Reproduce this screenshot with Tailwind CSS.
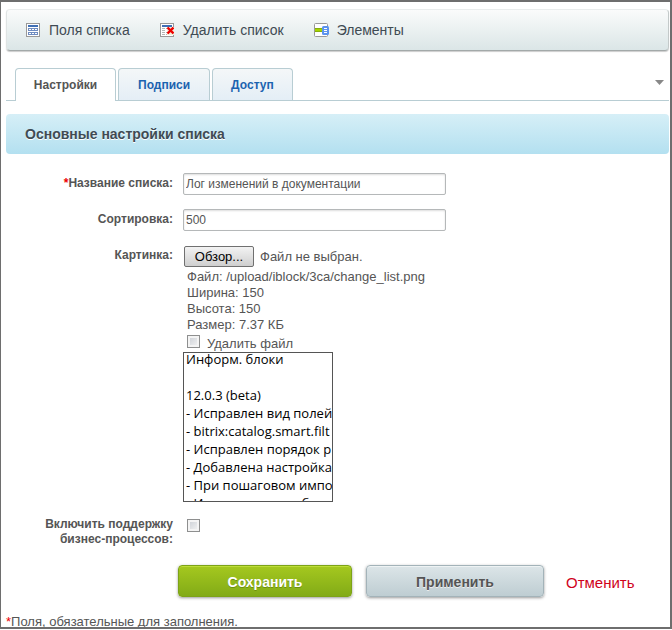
<!DOCTYPE html>
<html lang="ru">
<head>
<meta charset="utf-8">
<title>Настройки списка</title>
<script src="https://cdn.jsdelivr.net/npm/@tailwindcss/browser@4"></script>
</head>
<body class="bg-white font-['Liberation_Sans',Arial,sans-serif] text-[13px] leading-4 text-[#555]">
<div class="h-screen pb-px">
<div class="flex h-full flex-col overflow-hidden border border-t-2 border-r-2 border-b-2 border-[#6e6e6e] pr-px pl-[5px] pt-[7px]">
  <nav class="flex h-[42px] shrink-0 items-center gap-[30px] rounded border border-t-[#e9ecec] border-r-[#c3c9c9] border-b-[#a3a9a9] border-l-[#dfe3e3] bg-linear-to-b from-[#fafbfb] to-[#dbe6e7] pl-[19px] text-[14px] text-[#3f4b54] shadow-[0_1px_1px_#ccc]">
    <a href="#" class="flex items-center gap-[9px]">
      <svg width="14" height="14" viewBox="0 0 14 14" shape-rendering="crispEdges"><path d="M0 0h14v14H0z" fill="#999"/><path d="M1 1h12v12H1z" fill="#fff"/><path d="M2 2h10v2H2z" fill="#3f6fb5"/><path d="M2 5h10v3H2zM2 9h10v3H2z" fill="#6f8cc0"/><path d="M3 6h2v1H3zM6 6h2v1H6zM9 6h2v1H9zM3 10h2v1H3zM6 10h2v1H6zM9 10h2v1H9z" fill="#fff"/></svg>
      Поля списка</a>
    <a href="#" class="flex items-center gap-[9px]">
      <svg width="14" height="14" viewBox="0 0 14 14" shape-rendering="crispEdges"><path d="M0 0h14v14H0z" fill="#999"/><path d="M1 1h12v12H1z" fill="#fff"/><path d="M2 2h10v2H2z" fill="#3f6fb5"/><path d="M2 5h3v1H2zM2 7h3v1H2zM2 9h3v1H2zM2 11h3v1H2zM6 5h2v1H6zM6 9h1v1H6zM6 11h2v1H6z" fill="#b5b5b5"/><path d="M7 4h7v8H7z" fill="#f3efd8"/><path d="M7.500 4.500l6 6M13.500 4.500l-6 6" stroke="#e00" stroke-width="2.400" shape-rendering="auto"/></svg>
      Удалить список</a>
    <a href="#" class="flex items-center gap-2">
      <svg width="15" height="14" viewBox="0 0 15 14"><rect x=".5" y=".5" width="13" height="13" rx="1" fill="#fff" stroke="#999"/><path d="M1 5h8v4H1z" fill="#a6d400"/><path d="M1 5h8v1H1zM1 8h8v1H1z" fill="#86ae0c"/><rect x="8" y="3" width="7" height="9" rx="1.500" fill="#5b93ee"/><path d="M10 5.500h3M10 7.500h3M10 9.500h3" stroke="#fff"/></svg>
      Элементы</a>
  </nav>

  <div class="mt-[17px] flex h-[33px] shrink-0 text-[12px] font-bold text-[#1c63b0]">
    <div class="w-[9px] border-b border-[#b8cdd3]"></div>
    <a href="#" class="flex w-[101px] items-center justify-center rounded-t border border-b-0 border-[#b8cdd3] bg-white text-[#555]">Настройки</a>
    <div class="flex grow border-b border-[#b8cdd3]">
      <div class="flex gap-[2px] pl-[2px]">
        <a href="#" class="flex items-center rounded-t border border-b-0 border-[#b8cdd3] bg-linear-to-b from-[#f4f7f8] to-[#e4eef6] px-[19px]">Подписи</a>
        <a href="#" class="flex items-center rounded-t border border-b-0 border-[#b8cdd3] bg-linear-to-b from-[#f4f7f8] to-[#e4eef6] px-[18px]">Доступ</a>
      </div>
      <button type="button" aria-label="Ещё" class="ml-auto mr-[5px] mb-1"><svg width="9" height="5" viewBox="0 0 9 5"><path d="M0 0h9L4.500 5z" fill="#888"/></svg></button>
    </div>
  </div>

  <h1 class="mt-[13px] flex h-10 shrink-0 items-center rounded bg-linear-to-b from-[#d6eff7] to-[#b3e0f0] pl-[19px] text-[14px] font-bold text-[#3f4b54] [text-shadow:0_1px_0_#fff]">Основные настройки списка</h1>

  <form class="shrink-0 pt-[19px]">
    <div class="grid grid-cols-[167px_1fr] gap-x-[10px]">
      <label for="name" class="h-9 pt-[2px] text-right text-[12px] font-bold"><span class="text-[#e00]">*</span>Название списка:</label>
      <div><input id="name" type="text" value="Лог изменений в документации" class="block h-[22px] w-[263px] rounded-xs border border-[#b5b8b9] bg-white px-[2px] text-[12px] shadow-[inset_0_1px_2px_#ddd]"></div>
      <label for="sort" class="h-9 pt-[2px] text-right text-[12px] font-bold">Сортировка:</label>
      <div><input id="sort" type="text" value="500" class="block h-[22px] w-[263px] rounded-xs border border-[#b5b8b9] bg-white px-[2px] text-[12px] shadow-[inset_0_1px_2px_#ddd]"></div>
      <label for="file" class="pt-[2px] text-right text-[12px] font-bold">Картинка:</label>
      <div>
        <div class="flex items-center gap-[6px] pt-px pl-px">
          <input id="file" type="file" class="hidden">
          <button type="button" onclick="document.getElementById('file').click()" class="h-[21px] w-[70px] rounded-xs border border-[#707070] bg-linear-to-b from-[#f3f3f3] to-[#cfcfcf] text-[13px] leading-4 text-black">Обзор...</button>
          <span>Файл не выбран.</span>
        </div>
        <div class="pt-[2px] pl-1">
          <p>Файл: /upload/iblock/3ca/change_list.png</p>
          <p>Ширина: 150</p>
          <p>Высота: 150</p>
          <p>Размер: 7.37 КБ</p>
          <label class="flex items-start gap-[7px] pt-[2px]"><input type="checkbox" class="size-[13px] appearance-none border border-[#8e8f8f] bg-linear-to-br from-[#c9cdd3] to-[#f6f6f6] shadow-[inset_0_0_0_2px_#f4f4f4]"><span class="pt-px">Удалить файл</span></label>
        </div>
        <div class="h-[150px] w-[150px] overflow-hidden whitespace-pre border border-[#555] pl-[2px] font-['Open_Sans',sans-serif] text-[13px] leading-[18px] text-black"><div class="-mt-[3px]">Информ. блоки

12.0.3 (beta)
- Исправлен вид полей
- bitrix:catalog.smart.filt
- Исправлен порядок р
- Добавлена настройка
- При пошаговом импо
- Исправлена ошибка</div></div>
      </div>
      <label for="bp" class="pt-[15px] text-right text-[12px] leading-[15px] font-bold">Включить поддержку бизнес-процессов:</label>
      <div class="pt-[17px] pl-1"><input id="bp" type="checkbox" class="block size-[13px] appearance-none border border-[#8e8f8f] bg-linear-to-br from-[#c9cdd3] to-[#f6f6f6] shadow-[inset_0_0_0_2px_#f4f4f4]"></div>
    </div>
    <div class="mt-[18px] flex h-8 items-center pl-[172px] text-[14px]">
      <button type="submit" class="mr-[14px] h-8 w-[174px] rounded border border-[#7da317] bg-linear-to-b from-[#a5c81f] to-[#82ab17] pt-[2px] font-bold text-white shadow-[0_1px_3px_#999,inset_0_1px_0_#bddc38] [text-shadow:0_1px_0_#6d8f10]">Сохранить</button>
      <button type="button" class="mr-[22px] h-8 w-[178px] rounded border border-[#a3b3b9] bg-linear-to-b from-[#dce5e8] to-[#becdd2] pt-[2px] font-bold text-[#555] shadow-[0_1px_3px_#999,inset_0_1px_0_#eef3f4] [text-shadow:0_1px_0_#eee]">Применить</button>
      <a href="#" class="pt-[3px] text-[15px] text-[#d0021b]">Отменить</a>
    </div>
  </form>
  <p class="mt-[17px] shrink-0"><span class="text-[#e00]">*</span>Поля, обязательные для заполнения.</p>
</div>
</div>
</body>
</html>
